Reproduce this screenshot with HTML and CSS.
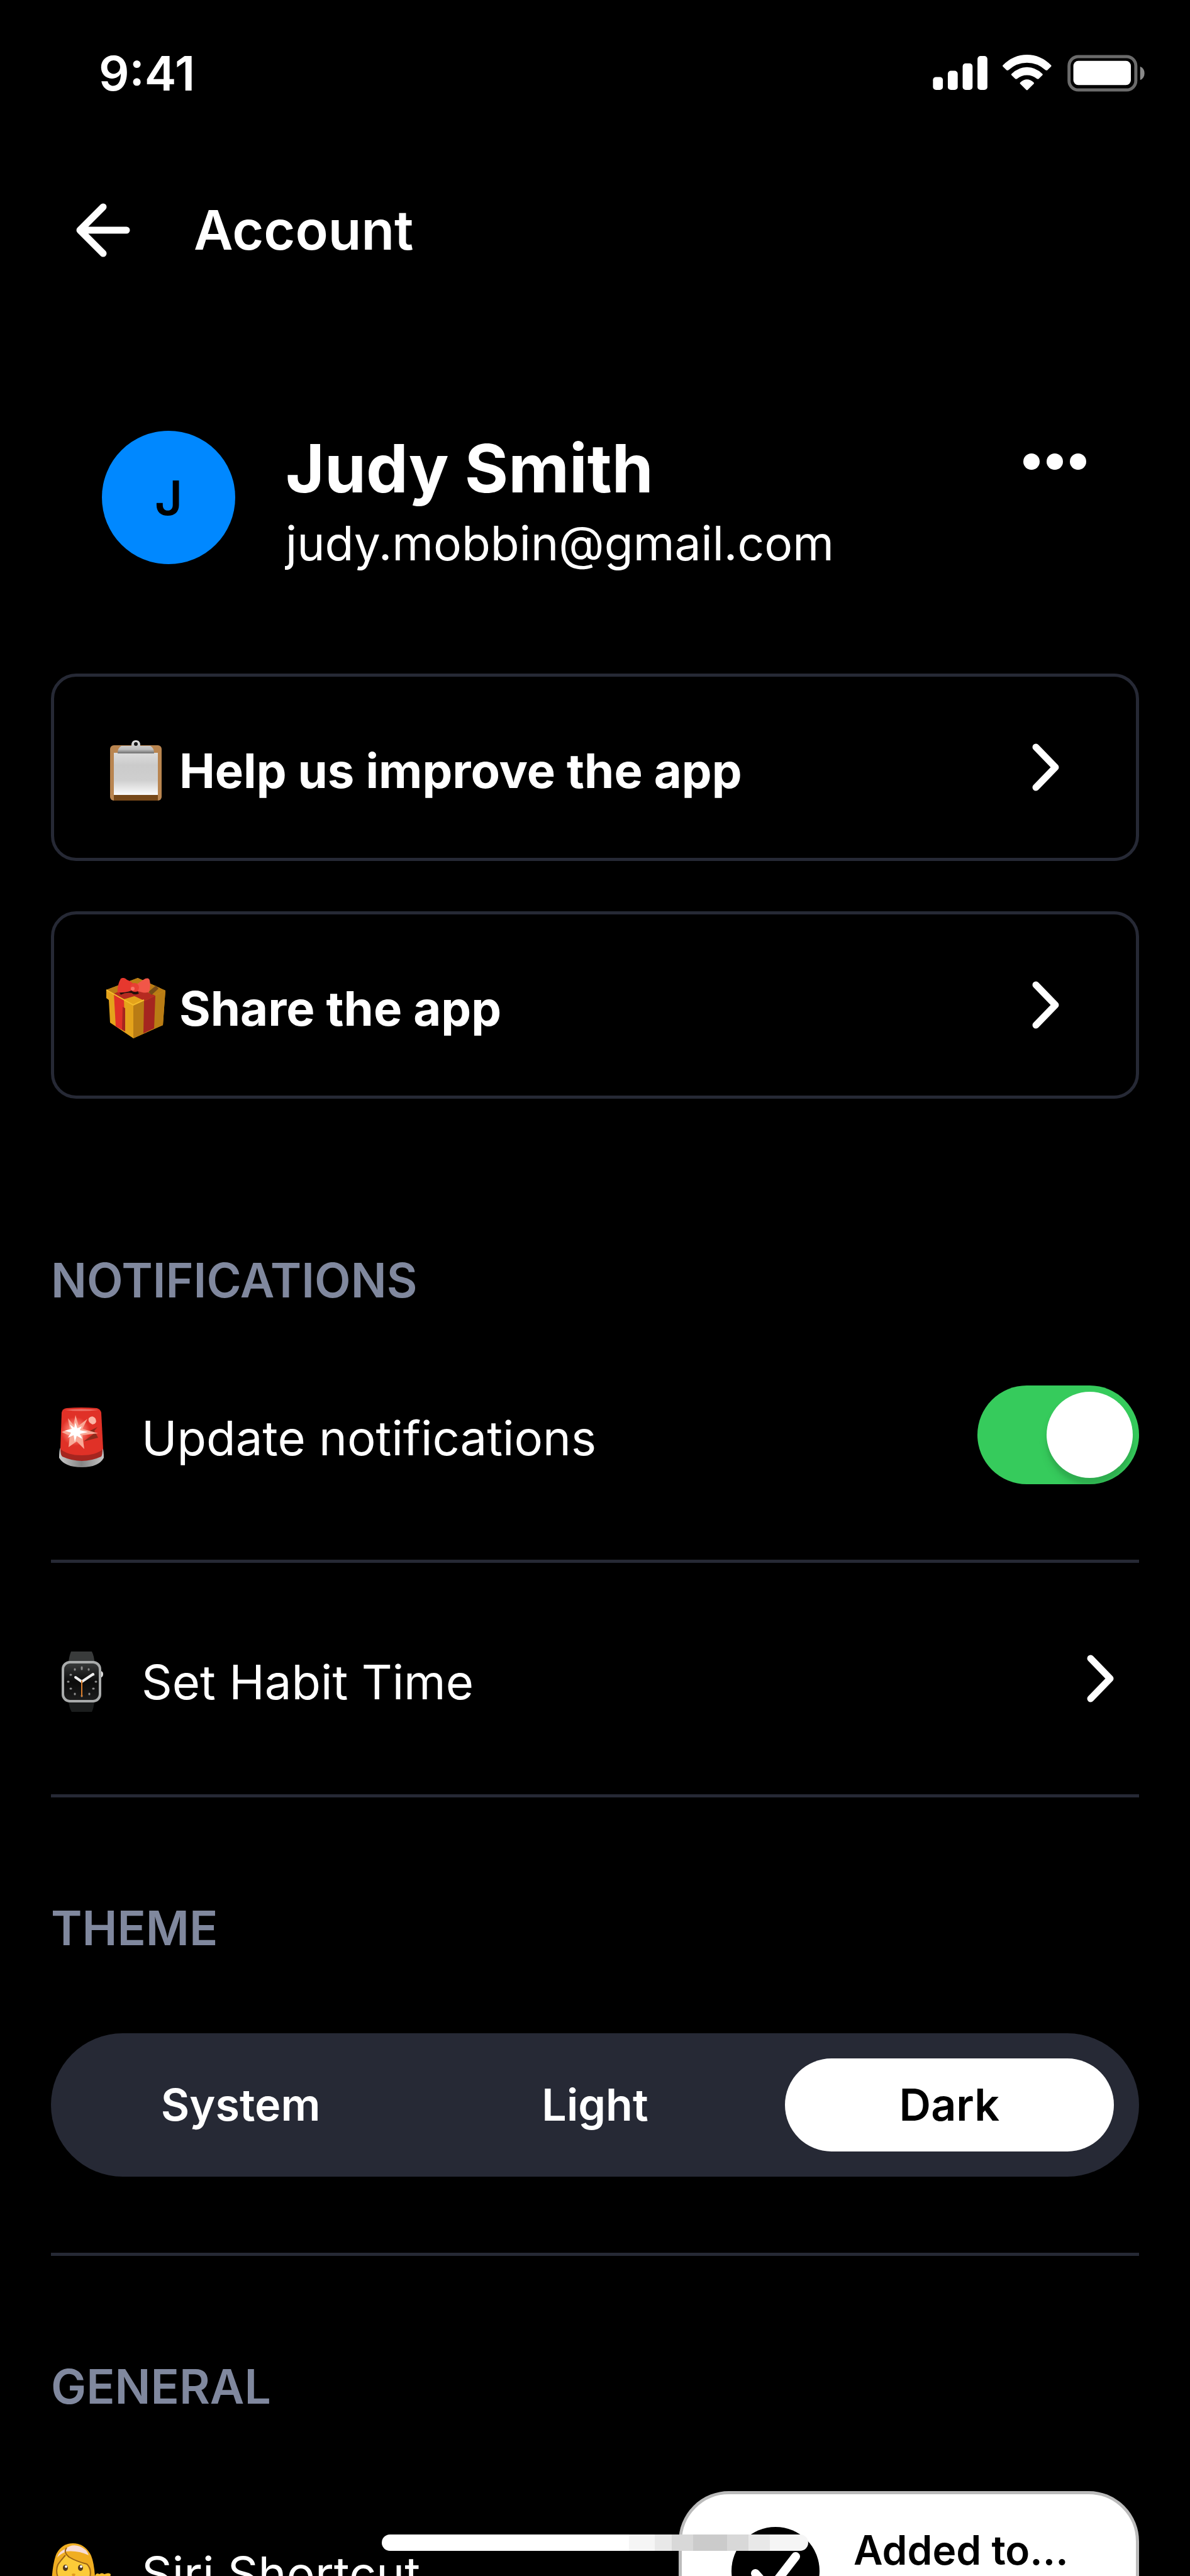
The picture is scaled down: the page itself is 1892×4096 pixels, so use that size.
FILE: index.html
```
<!DOCTYPE html>
<html lang="en">
<head>
    <meta charset="UTF-8">
    <meta name="viewport" content="width=device-width, initial-scale=1.0">
    <title>Account</title>
    <link rel="stylesheet" href="styles.css">
</head>
<body>
    <div class="screen">
        <div class="status">
            <span class="time">9:41</span>
            <svg class="status_icons" viewBox="0 0 342 60" fill="#fff">
                <rect x="0" y="36" width="16" height="21" rx="5"/>
                <rect x="24" y="26" width="16" height="31" rx="5"/>
                <rect x="48" y="14" width="16" height="43" rx="5"/>
                <rect x="72" y="2" width="16" height="55" rx="5"/>
                <path d="M113 17Q130 0 152 0T191 17Q192 18 191 19L185 25Q184 26 182 25Q169 13 152 13T122 25Q120 26 119 25L113 19Q112 18 113 17Z"/>
                <path d="M127 31Q138 20 152 20T177 31Q178 32 177 33L171 39Q170 40 168 39Q161 33 152 33T136 39Q134 40 133 39L127 33Q126 32 127 31Z"/>
                <path d="M141 45Q152 35 163 45Q164 46 163 47L153 57Q152 58 151 57L141 47Q140 46 141 45Z"/>
                <rect x="220" y="3" width="108" height="54" rx="15" fill="none" stroke="#6b6b6b" stroke-width="5"/>
                <rect x="227" y="10" width="93" height="39" rx="8"/>
                <path d="M335 19Q342 22 342 30T335 41Z" fill="#8a8a8a"/>
            </svg>
        </div>

        <header class="header">
            <button class="back" type="button" aria-label="Back">
                <svg viewBox="0 0 86 86"><path d="M43 6L6 43L43 80M6 43H80"/></svg>
            </button>
            <h1>Account</h1>
        </header>

        <main class="content">
            <div class="profile">
                <div class="avatar">J</div>
                <div class="who">
                    <h2>Judy Smith</h2>
                    <p>judy.mobbin@gmail.com</p>
                </div>
                <button class="more" type="button" aria-label="More">
                    <svg viewBox="0 0 102 28"><circle cx="14" cy="14" r="13"/><circle cx="51" cy="14" r="13"/><circle cx="88" cy="14" r="13"/></svg>
                </button>
            </div>

            <div class="cards">
                <a class="card" href="#">
                    <span class="label">
                        <!-- clipboard -->
                        <svg class="emoji" viewBox="0 0 96 96">
                            <defs>
                                <linearGradient id="paper" x1="0" y1="0" x2="0" y2="1">
                                    <stop offset="0" stop-color="#dcdcdc"/><stop offset=".3" stop-color="#cbcbcb"/><stop offset=".65" stop-color="#cfcfcf"/><stop offset="1" stop-color="#fbfbfb"/>
                                </linearGradient>
                                <linearGradient id="clip" x1="0" y1="0" x2="0" y2="1">
                                    <stop offset="0" stop-color="#e2e2e2"/><stop offset=".7" stop-color="#bdbdbd"/><stop offset="1" stop-color="#6d6d6d"/>
                                </linearGradient>
                            </defs>
                            <rect x="7" y="8" width="82" height="88" rx="6" fill="#b98550"/>
                            <path d="M13 87H83V96H13Z" fill="#764819"/>
                            <rect x="13" y="20" width="70" height="67" fill="url(#paper)"/>
                            <path d="M41 9V6Q42 0 48 0T55 6V9H71Q77 12 77 21H19Q19 12 25 9Z" fill="url(#clip)"/>
                            <circle cx="48" cy="6" r="3" fill="#161616"/>
                        </svg>
                        Help us improve the app
                    </span>
                    <svg class="chevron" viewBox="0 0 43 76"><path d="M6 6L37 38L6 70"/></svg>
                </a>
                <a class="card" href="#">
                    <span class="label">
                        <!-- gift -->
                        <svg class="emoji" viewBox="0 0 96 96">
                            <path d="M1 19L51 0L95 20L94 33L91 75L44 96L7 71L5 35L1 32Z" fill="#e4a31b"/>
                            <path d="M1 19L51 0L95 20L44 43Z" fill="#b97c14"/>
                            <path d="M44 43L95 20L94 33L91 75L44 96Z" fill="#b97c14"/>
                            <path d="M13 24L29 34L31 85L16 77Z" fill="#e03127"/>
                            <path d="M27 46L31 48V85L26 82Z" fill="#a5251f"/>
                            <path d="M61 37L79 28L77 80L60 88Z" fill="#a5251f"/>
                            <path d="M13 25L35 15L60 20L79 28L61 37L45 29L29 34Z" fill="#b52a20"/>
                            <path d="M29 34L46 29L61 36L44 43Z" fill="#e4a31b"/>
                            <path d="M1 19L44 43L61 35" fill="none" stroke="#f5bd2b" stroke-width="2"/>
                            <path d="M68 22L80 12L84 17L73 27Z" fill="#774b17"/>
                            <path d="M23 25Q32 20 42 22Q46 26 52 23" fill="none" stroke="#24100a" stroke-width="4"/>
                            <path d="M44 17Q39 24 19 23Q18 12 24 1Q29 -2 34 3Q43 6 44 11Z" fill="#e6382e"/>
                            <path d="M47 12Q56 5 63 1Q69 -1 70 4Q72 13 69 22Q62 26 47 19Z" fill="#f15648"/>
                            <circle cx="46" cy="15" r="7" fill="#e83f34"/>
                            <circle cx="43" cy="17" r="3" fill="#f97368"/>
                        </svg>
                        Share the app
                    </span>
                    <svg class="chevron" viewBox="0 0 43 76"><path d="M6 6L37 38L6 70"/></svg>
                </a>
            </div>

            <section class="group">
                <h3>NOTIFICATIONS</h3>
                <div class="row row_tall">
                    <label class="label" for="updates">
                        <!-- siren -->
                        <svg class="emoji" viewBox="0 0 96 96">
                            <defs>
                                <linearGradient id="base"><stop offset="0" stop-color="#c9c9c9"/><stop offset=".5" stop-color="#858585"/><stop offset="1" stop-color="#c4c4c4"/></linearGradient>
                                <radialGradient id="glow"><stop offset="0" stop-color="#ffc9b4"/><stop offset=".6" stop-color="#f4665a"/><stop offset="1" stop-color="#e03127"/></radialGradient>
                            </defs>
                            <path d="M15 64Q13 68 13 80Q22 95 49 95T84 80Q84 68 82 64Z" fill="url(#base)"/>
                            <path d="M15 66Q15 75 18 78Q49 92 80 78Q82 75 82 66Z" fill="#a5251f"/>
                            <path d="M17 8Q18 2 25 1Q48 -1 73 1Q79 3 80 8L83 66Q72 76 49 76T15 66Z" fill="#e03127"/>
                            <path d="M22 4Q48 1 76 4Q48 7 22 4Z" fill="#ee7469"/>
                            <circle cx="39" cy="38" r="23" fill="url(#glow)"/>
                            <path d="M60 17Q66 11 71 18Q74 26 66 27Q58 23 60 17Z" fill="#fbb6a6"/>
                            <path d="M74 31L60 38L69 41L52 54L75 48L69 37Z" fill="#8d2a1b"/>
                            <path d="M39 12L44 29L58 18L50 34L75 41L50 44L53 66L41 54L28 63L30 45L17 39L30 34L27 17L36 28Z" fill="#f9a997"/>
                            <path d="M39 24L42 33L49 30L46 36L59 39L46 42L50 50L41 45L38 55L36 44L27 48L32 40L22 37L33 34L30 27L37 32Z" fill="#fff"/>
                        </svg>
                        Update notifications
                    </label>
                    <input class="switch" id="updates" type="checkbox" role="switch" checked>
                </div>
                <a class="row" href="#">
                    <span class="label">
                        <!-- watch -->
                        <svg class="emoji" viewBox="0 0 96 96">
                            <defs>
                                <linearGradient id="face" x1="0" y1="0" x2="0" y2="1"><stop offset="0" stop-color="#3b3d3d"/><stop offset=".5" stop-color="#0b0b0b"/><stop offset="1" stop-color="#1d1d1d"/></linearGradient>
                            </defs>
                            <path d="M32 0H65Q69 8 69 17H28Q29 7 32 0Z" fill="#393b3b"/>
                            <path d="M28 79H69Q68 90 65 96H33Q29 90 28 79Z" fill="#1b1d1d"/>
                            <path d="M78 31Q83 31 83 36T78 42Z" fill="#dedede"/>
                            <rect x="19" y="17" width="59" height="62" rx="11" fill="url(#face)" stroke="#a9abab" stroke-width="4"/>
                            <g stroke="#8c8c8c" stroke-width="3" stroke-linecap="round">
                                <path d="M49 25V28M38 28V29M60 28V29M31 37H32M67 37H68M27 48H28M71 48H72M31 59H32M67 59H68M38 67V68M61 67V68M49 70V71"/>
                            </g>
                            <path d="M39 41L49 48L67 36" fill="none" stroke="#efefef" stroke-width="4" stroke-linecap="round"/>
                            <path d="M49 46V72" stroke="#dd7e2b" stroke-width="2"/>
                        </svg>
                        Set Habit Time
                    </span>
                    <svg class="chevron" viewBox="0 0 43 76"><path d="M6 6L37 38L6 70"/></svg>
                </a>
            </section>

            <section class="group">
                <h3>THEME</h3>
                <div class="segments">
                    <label><input type="radio" name="theme"><span>System</span></label>
                    <label><input type="radio" name="theme"><span>Light</span></label>
                    <label><input type="radio" name="theme" checked><span>Dark</span></label>
                </div>
            </section>

            <section class="group">
                <h3>GENERAL</h3>
                <a class="row row_first" href="#">
                    <span class="label">
                        <!-- woman -->
                        <svg class="emoji" viewBox="0 0 96 96">
                            <path d="M0 96Q0 36 9 16Q18 0 35 0T62 16Q72 32 71 96Z" fill="#f0ae22"/>
                            <path d="M14 80Q6 46 13 32Q19 24 23 19Q38 26 57 33Q65 44 60 80Q37 92 14 80Z" fill="#fccb38"/>
                            <path d="M23 9Q33 0 46 5Q57 9 60 19Q42 11 24 13Q12 19 10 23Q12 13 23 9Z" fill="#f7dcd6"/>
                            <path d="M25 7Q19 14 29 22Q41 29 57 33Q67 42 60 60M23 19Q15 28 11 34Q6 46 14 60" fill="none" stroke="#9a6417" stroke-width="2"/>
                            <ellipse cx="23" cy="39" rx="4" ry="5" fill="#54391b"/>
                            <ellipse cx="47" cy="39" rx="4" ry="5" fill="#54391b"/>
                            <circle cx="24" cy="37" r="2" fill="#fff"/>
                            <circle cx="48" cy="37" r="2" fill="#fff"/>
                            <path d="M33 49Q36 47 39 49L38 52H34Z" fill="#e09a1c"/>
                            <path d="M70 68V52Q72 46 77 49Q81 46 85 49Q92 46 95 49L92 68Q81 76 70 68Z" fill="#fbc02e"/>
                        </svg>
                        Siri Shortcut
                    </span>
                </a>
            </section>
        </main>

        <div class="toast" role="status">
            <svg viewBox="0 0 140 140"><circle cx="70" cy="70" r="70"/><path d="M38 74L61 100L102 47"/></svg>
            <strong>Added to...</strong>
        </div>
        <div class="home_bar"></div>
    </div>
</body>
</html>
```
FILE: styles.css
```
*{box-sizing: border-box;}
body{margin: 0;background: #000;color: #fff;font: 76px/92px Inter, "Liberation Sans", sans-serif;}
h1,h2,h3,p{margin: 0;}
a{color: inherit;text-decoration: none;}
button{padding: 0;border: 0;background: none;color: inherit;}
svg{display: block;flex: none;}

.screen{position: relative;height: 100vh;overflow: hidden;}

.status{display: flex;align-items: center;justify-content: space-between;height: 232px;padding: 0 72px 0 157px;}
.time{font-weight: 600;}
.status_icons{width: 337px;height: 59px;}

.header{display: flex;align-items: center;gap: 101px;height: 267px;padding: 0 121px;}
.header h1{font-size: 86px;line-height: 104px;font-weight: 600;}
.back svg{width: 86px;height: 86px;fill: none;stroke: #fff;stroke-width: 11px;stroke-linecap: round;stroke-linejoin: round;}

.content{padding: 186px 81px 0;}

.profile{display: flex;align-items: flex-start;padding: 0 83px 0 81px;}
.avatar{flex: none;width: 212px;height: 212px;margin-right: 80px;border-radius: 50%;background: #0088ff;color: #000;
font-weight: 600;line-height: 212px;text-align: center;}
.who{flex: 1;}
.who h2{font-size: 106px;line-height: 120px;font-weight: 700;}
.who p{font-size: 75px;line-height: 118px;}
.more{height: 98px;}
.more svg{width: 102px;height: 28px;fill: #fff;}

.cards{display: grid;gap: 80px;margin-top: 148px;}
.card{display: flex;align-items: center;justify-content: space-between;height: 298px;padding: 0 122px 0 82px;
border: 5px solid #262935;border-radius: 40px;font-weight: 700;}
.label{display: flex;align-items: center;gap: 48px;padding-top: 10px;}
.card .label{gap: 21px;}
.emoji{width: 96px;height: 96px;}
.chevron{width: 43px;height: 76px;fill: none;stroke: #fff;stroke-width: 11px;stroke-linecap: round;stroke-linejoin: round;}

.group h3{font-size: 75px;line-height: 92px;font-weight: 600;color: #80889e;}
.cards + .group{padding-top: 243px;}
.group + .group{padding-top: 162px;}

.row{display: flex;align-items: center;justify-content: space-between;height: 373px;padding-right: 40px;border-bottom: 5px solid #262935;}
.row_tall{height: 403px;padding-right: 0;}
.row_first{margin-top: 62px;}

.switch{appearance: none;flex: none;width: 257px;height: 157px;margin: 0;padding: 10px;border-radius: 79px;background: #3a3d48;overflow: hidden;}
.switch::before{content: "";display: block;width: 137px;height: 137px;border-radius: 50%;background: #fff;
box-shadow: 0 10px 4px rgba(0,0,0,.06), 0 12px 14px rgba(0,0,0,.1);}
.switch:checked{background: #36cb5c;}
.switch:checked::before{margin-left: auto;}

.segments{display: grid;grid-template-columns: repeat(3, 1fr);gap: 40px;margin-top: 121px;padding: 40px;border-radius: 114px;background: #262935;}
.segments input{position: absolute;opacity: 0;}
.segments span{display: block;border-radius: 74px;font-size: 70px;line-height: 148px;font-weight: 600;text-align: center;}
.segments input:checked + span{background: #fff;color: #000;}
.group:has(.segments){padding-bottom: 121px;border-bottom: 5px solid #262935;}

/* floats over the bottom edge */
.toast{position: absolute;right: 81px;bottom: -165px;display: flex;gap: 54px;width: 732px;height: 300px;padding: 52px 79px;
border: 5px solid #bbb;border-radius: 80px;background: #fff;color: #000;}
.toast svg{width: 140px;height: 140px;}
.toast path{fill: none;stroke: #fff;stroke-width: 14px;stroke-linecap: round;stroke-linejoin: round;}
.toast strong{font-size: 64px;line-height: 74px;font-weight: 600;}

.home_bar{position: absolute;left: 50%;bottom: 40px;width: 678px;height: 26px;margin-left: -339px;border-radius: 13px;
background: linear-gradient(90deg, #fff 58%, #f5f5f5 58% 64%, #e8e8e8 64% 68%, #d8d8d8 68% 73%, #cbcbcb 73% 81%, #d8d8d8 81% 86%, #e8e8e8 86% 91%, #f5f5f5 91%);}
```
